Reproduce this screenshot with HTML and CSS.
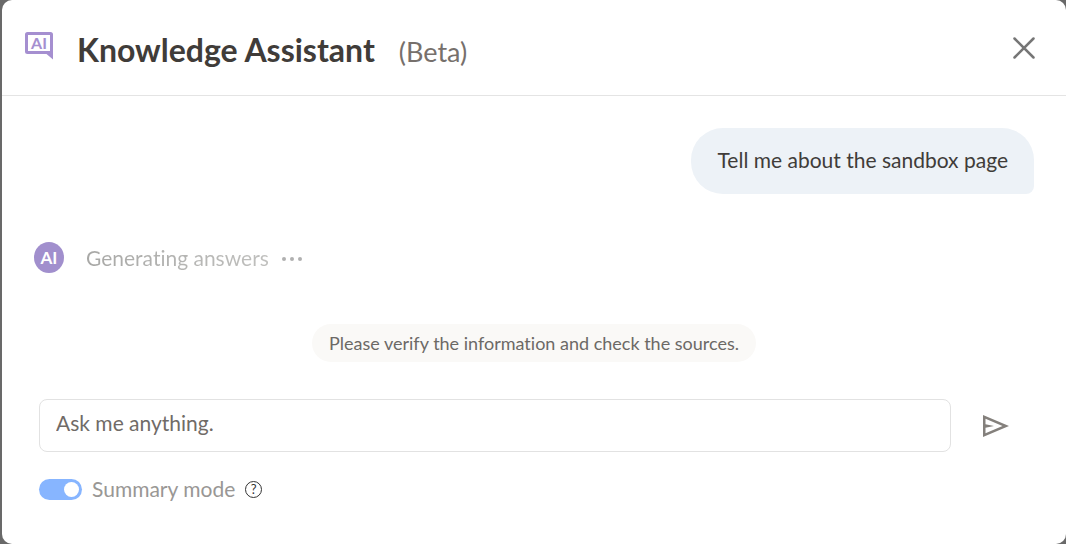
FILE: index.html
```html
<!DOCTYPE html>
<html lang="en">
<head>
<meta charset="utf-8">
<meta name="viewport" content="width=device-width, initial-scale=1">
<title>Knowledge Assistant</title>
<link rel="stylesheet" href="styles.css">
</head>
<body>
<section class="dialog" role="dialog" aria-labelledby="title">
  <header class="dialog-header">
    <svg class="logo" viewBox="0 0 28 28" aria-hidden="true">
      <path class="logo-frame" fill-rule="evenodd" d="M2.500 0H25.500Q28 0 28 2.500V27.500L21.500 22H2.500Q0 22 0 19.500V2.500Q0 0 2.500 0ZM3 3V19H25V3Z"/>
      <text class="logo-text" x="14" y="17" text-anchor="middle">AI</text>
    </svg>
    <h1 class="title" id="title">Knowledge Assistant</h1>
    <span class="beta">(Beta)</span>
    <button class="close" type="button" aria-label="Close">
      <svg viewBox="0 0 22 22" width="22" height="22" aria-hidden="true"><path d="M1.500 1.500L20.500 20.500M20.500 1.500L1.500 20.500"/></svg>
    </button>
  </header>
  <main class="chat">
    <p class="bubble">Tell me about the sandbox page</p>
    <div class="status" role="status">
      <span class="avatar">AI</span>
      <span class="status-text">Generating answers</span>
      <span class="dots" aria-hidden="true"><i></i><i></i><i></i></span>
    </div>
    <p class="notice">Please verify the information and check the sources.</p>
  </main>
  <form class="composer">
    <div class="entry">
      <input class="question" type="text" aria-label="Question" placeholder="Ask me anything.">
      <button class="send" type="submit" aria-label="Send">
        <svg viewBox="0 0 26 22" width="26" height="22" aria-hidden="true"><path fill-rule="evenodd" d="M0 0L26 11L0 22ZM2.500 3.800V9.300L11 11L2.500 12.700V18.200L19.500 11Z"/></svg>
      </button>
    </div>
    <div class="mode">
      <input class="switch" type="checkbox" role="switch" id="summary" checked>
      <label class="mode-label" for="summary">Summary mode</label>
      <button class="help" type="button" aria-label="About summary mode">?</button>
    </div>
  </form>
</section>
</body>
</html>
```
FILE: styles.css
```css
* {
  box-sizing: border-box;
}

body {
  margin: 0;
  padding-left: 2px;
  background: #696969;
  font-family: Lato, "Open Sans", sans-serif;
  font-size: 21px;
  line-height: 26px;
  font-variant-ligatures: none;
  color: #403c39;
}

button {
  padding: 0;
  border: 0;
  background: none;
  font: inherit;
  cursor: pointer;
}

svg {
  display: block;
}

.dialog {
  min-height: 100vh;
  border-radius: 10px;
  background: #fff;
}

.dialog-header {
  display: flex;
  align-items: center;
  height: 96px;
  padding: 4px 31px 0 23px;
  border-bottom: 1px solid #e4e4e4;
}

.logo {
  width: 28px;
  height: 28px;
  margin: 0 24px 8px 0;
}

.logo-frame {
  fill: #a58fd0;
}

.logo-text {
  fill: #a58fd0;
  font: bold 16px Lato, sans-serif;
}

.title {
  margin: 0;
  font-size: 32px;
  line-height: 40px;
  font-weight: 700;
}

.beta {
  margin: 4px 0 0 24px;
  font-size: 27px;
  line-height: 32px;
  color: #76706c;
}

.close {
  margin: 0 0 4px auto;
}

.close path {
  fill: none;
  stroke: #767676;
  stroke-width: 2.500;
  stroke-linecap: round;
}

.chat {
  display: flex;
  flex-direction: column;
  padding: 32px 32px 0;
}

.bubble {
  align-self: flex-end;
  margin: 0;
  padding: 19px 26px 21px 27px;
  border-radius: 32px 32px 8px 32px;
  background: #edf2f7;
}

.status {
  display: flex;
  align-items: center;
  margin-top: 48px;
}

.avatar {
  width: 30px;
  height: 31px;
  border-radius: 50%;
  background: #a18fcd;
  color: #fff;
  font: bold 17px/31px Lato, sans-serif;
  text-align: center;
}

.status-text {
  margin-left: 22px;
  background: linear-gradient(90deg, #a8a8a6, #c0c0be);
  background-clip: text;
  color: transparent;
}

.dots {
  display: flex;
  gap: 4px;
  margin: 2px 0 0 13px;
}

.dots i {
  width: 4px;
  height: 4px;
  border-radius: 50%;
  background: #b0b0b0;
}

.notice {
  align-self: center;
  margin: 51px 0 0;
  padding: 7px 17px;
  border-radius: 20px;
  background: #faf9f7;
  color: #6c6966;
  font-size: 18px;
  line-height: 24px;
}

.composer {
  padding: 37px 57px 40px 37px;
}

.entry {
  display: flex;
  align-items: center;
  gap: 32px;
}

.question {
  flex: 1;
  min-width: 0;
  height: 53px;
  padding: 0 16px 6px;
  border: 1px solid #e2e2e2;
  border-radius: 8px;
  background: #fff;
  color: #403c39;
  font: inherit;
}

.question::placeholder {
  color: #706b67;
  opacity: 1;
}

.send path {
  fill: #84807c;
}

.mode {
  display: flex;
  align-items: center;
  margin-top: 24px;
}

.switch {
  appearance: none;
  display: flex;
  align-items: center;
  width: 43px;
  height: 21px;
  margin: 0 10px 0 0;
  padding: 0 3px;
  border-radius: 11px;
  background: #bbb;
}

.switch::before {
  content: "";
  width: 15px;
  height: 15px;
  border-radius: 50%;
  background: #fff;
}

.switch:checked {
  justify-content: flex-end;
  background: #87b5ff;
}

.mode-label {
  color: #999795;
}

.help {
  width: 17px;
  height: 17px;
  margin-left: 10px;
  border: 1px solid #333;
  border-radius: 50%;
  color: #333;
  font-size: 13px;
  line-height: 15px;
}
```
